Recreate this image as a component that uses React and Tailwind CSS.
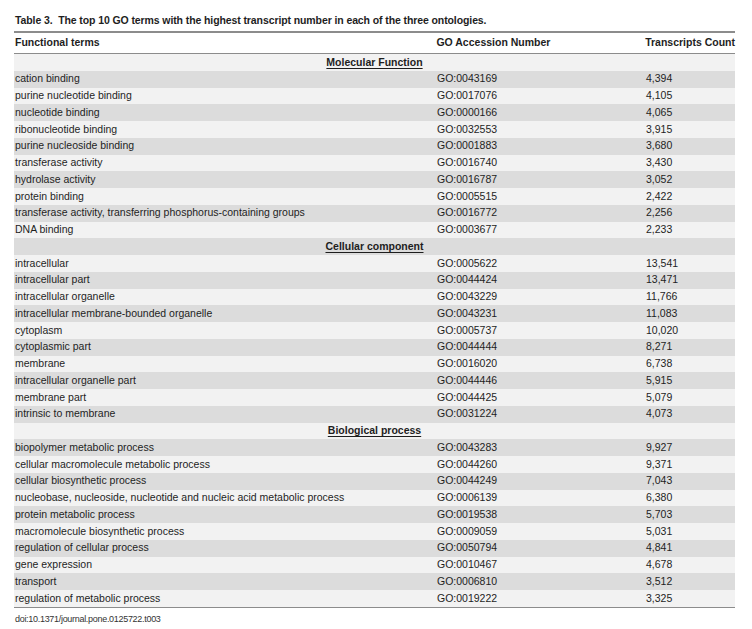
import React from "react";

const sections = [
  {
    title: "Molecular Function",
    rows: [
      ["cation binding", "GO:0043169", "4,394"],
      ["purine nucleotide binding", "GO:0017076", "4,105"],
      ["nucleotide binding", "GO:0000166", "4,065"],
      ["ribonucleotide binding", "GO:0032553", "3,915"],
      ["purine nucleoside binding", "GO:0001883", "3,680"],
      ["transferase activity", "GO:0016740", "3,430"],
      ["hydrolase activity", "GO:0016787", "3,052"],
      ["protein binding", "GO:0005515", "2,422"],
      ["transferase activity, transferring phosphorus-containing groups", "GO:0016772", "2,256"],
      ["DNA binding", "GO:0003677", "2,233"],
    ],
  },
  {
    title: "Cellular component",
    rows: [
      ["intracellular", "GO:0005622", "13,541"],
      ["intracellular part", "GO:0044424", "13,471"],
      ["intracellular organelle", "GO:0043229", "11,766"],
      ["intracellular membrane-bounded organelle", "GO:0043231", "11,083"],
      ["cytoplasm", "GO:0005737", "10,020"],
      ["cytoplasmic part", "GO:0044444", "8,271"],
      ["membrane", "GO:0016020", "6,738"],
      ["intracellular organelle part", "GO:0044446", "5,915"],
      ["membrane part", "GO:0044425", "5,079"],
      ["intrinsic to membrane", "GO:0031224", "4,073"],
    ],
  },
  {
    title: "Biological process",
    rows: [
      ["biopolymer metabolic process", "GO:0043283", "9,927"],
      ["cellular macromolecule metabolic process", "GO:0044260", "9,371"],
      ["cellular biosynthetic process", "GO:0044249", "7,043"],
      ["nucleobase, nucleoside, nucleotide and nucleic acid metabolic process", "GO:0006139", "6,380"],
      ["protein metabolic process", "GO:0019538", "5,703"],
      ["macromolecule biosynthetic process", "GO:0009059", "5,031"],
      ["regulation of cellular process", "GO:0050794", "4,841"],
      ["gene expression", "GO:0010467", "4,678"],
      ["transport", "GO:0006810", "3,512"],
      ["regulation of metabolic process", "GO:0019222", "3,325"],
    ],
  },
];

export default function App() {
  const items = [];
  sections.forEach((s) => {
    items.push({ type: "section", title: s.title });
    s.rows.forEach((r) => items.push({ type: "row", r }));
  });

  return (
    <div
      className="w-[752px] h-[629px] bg-white text-[#1e1e1e] overflow-hidden"
      style={{ fontFamily: '"Liberation Sans", Arial, sans-serif' }}
    >
      <div className="pl-[14px] pr-[17px] pt-[13px]">
        <div className="text-[10.5px] font-bold leading-[14px] pl-[1px] tracking-[-0.1px] whitespace-nowrap">
          Table 3.&nbsp; The top 10 GO terms with the highest transcript number in each of the three ontologies.
        </div>
        <div className="mt-[4px] border-t-2 border-[#8c8c8c]" />
        <div className="flex h-[20px] items-center text-[10.5px] font-bold whitespace-nowrap">
          <div className="w-[423px] pl-[1px]">Functional terms</div>
          <div className="w-[209px]">GO Accession Number</div>
          <div className="flex-1">Transcripts Count</div>
        </div>
        <div className="border-t-[1.5px] border-[#8c8c8c]" />
        <div>
          {items.map((it, i) => {
            const bg = i % 2 === 0 ? "bg-[#f2f2f2]" : "bg-[#dcdcdc]";
            if (it.type === "section") {
              return (
                <div key={i} className={`${bg} h-[16.75px] flex items-center justify-center text-[10.5px] font-bold`}>
                  <span className="underline underline-offset-[2px] decoration-[1px]">{it.title}</span>
                </div>
              );
            }
            return (
              <div key={i} className={`${bg} h-[16.75px] flex items-center text-[10.5px] whitespace-nowrap`}>
                <div className="w-[423px] pl-[1px]">{it.r[0]}</div>
                <div className="w-[209px]">{it.r[1]}</div>
                <div className="flex-1">{it.r[2]}</div>
              </div>
            );
          })}
        </div>
        <div className="border-t-[1.5px] border-[#8c8c8c]" />
        <div className="mt-[5px] pl-[1px] text-[9px] text-[#333] tracking-[-0.3px]">
          doi:10.1371/journal.pone.0125722.t003
        </div>
      </div>
    </div>
  );
}
